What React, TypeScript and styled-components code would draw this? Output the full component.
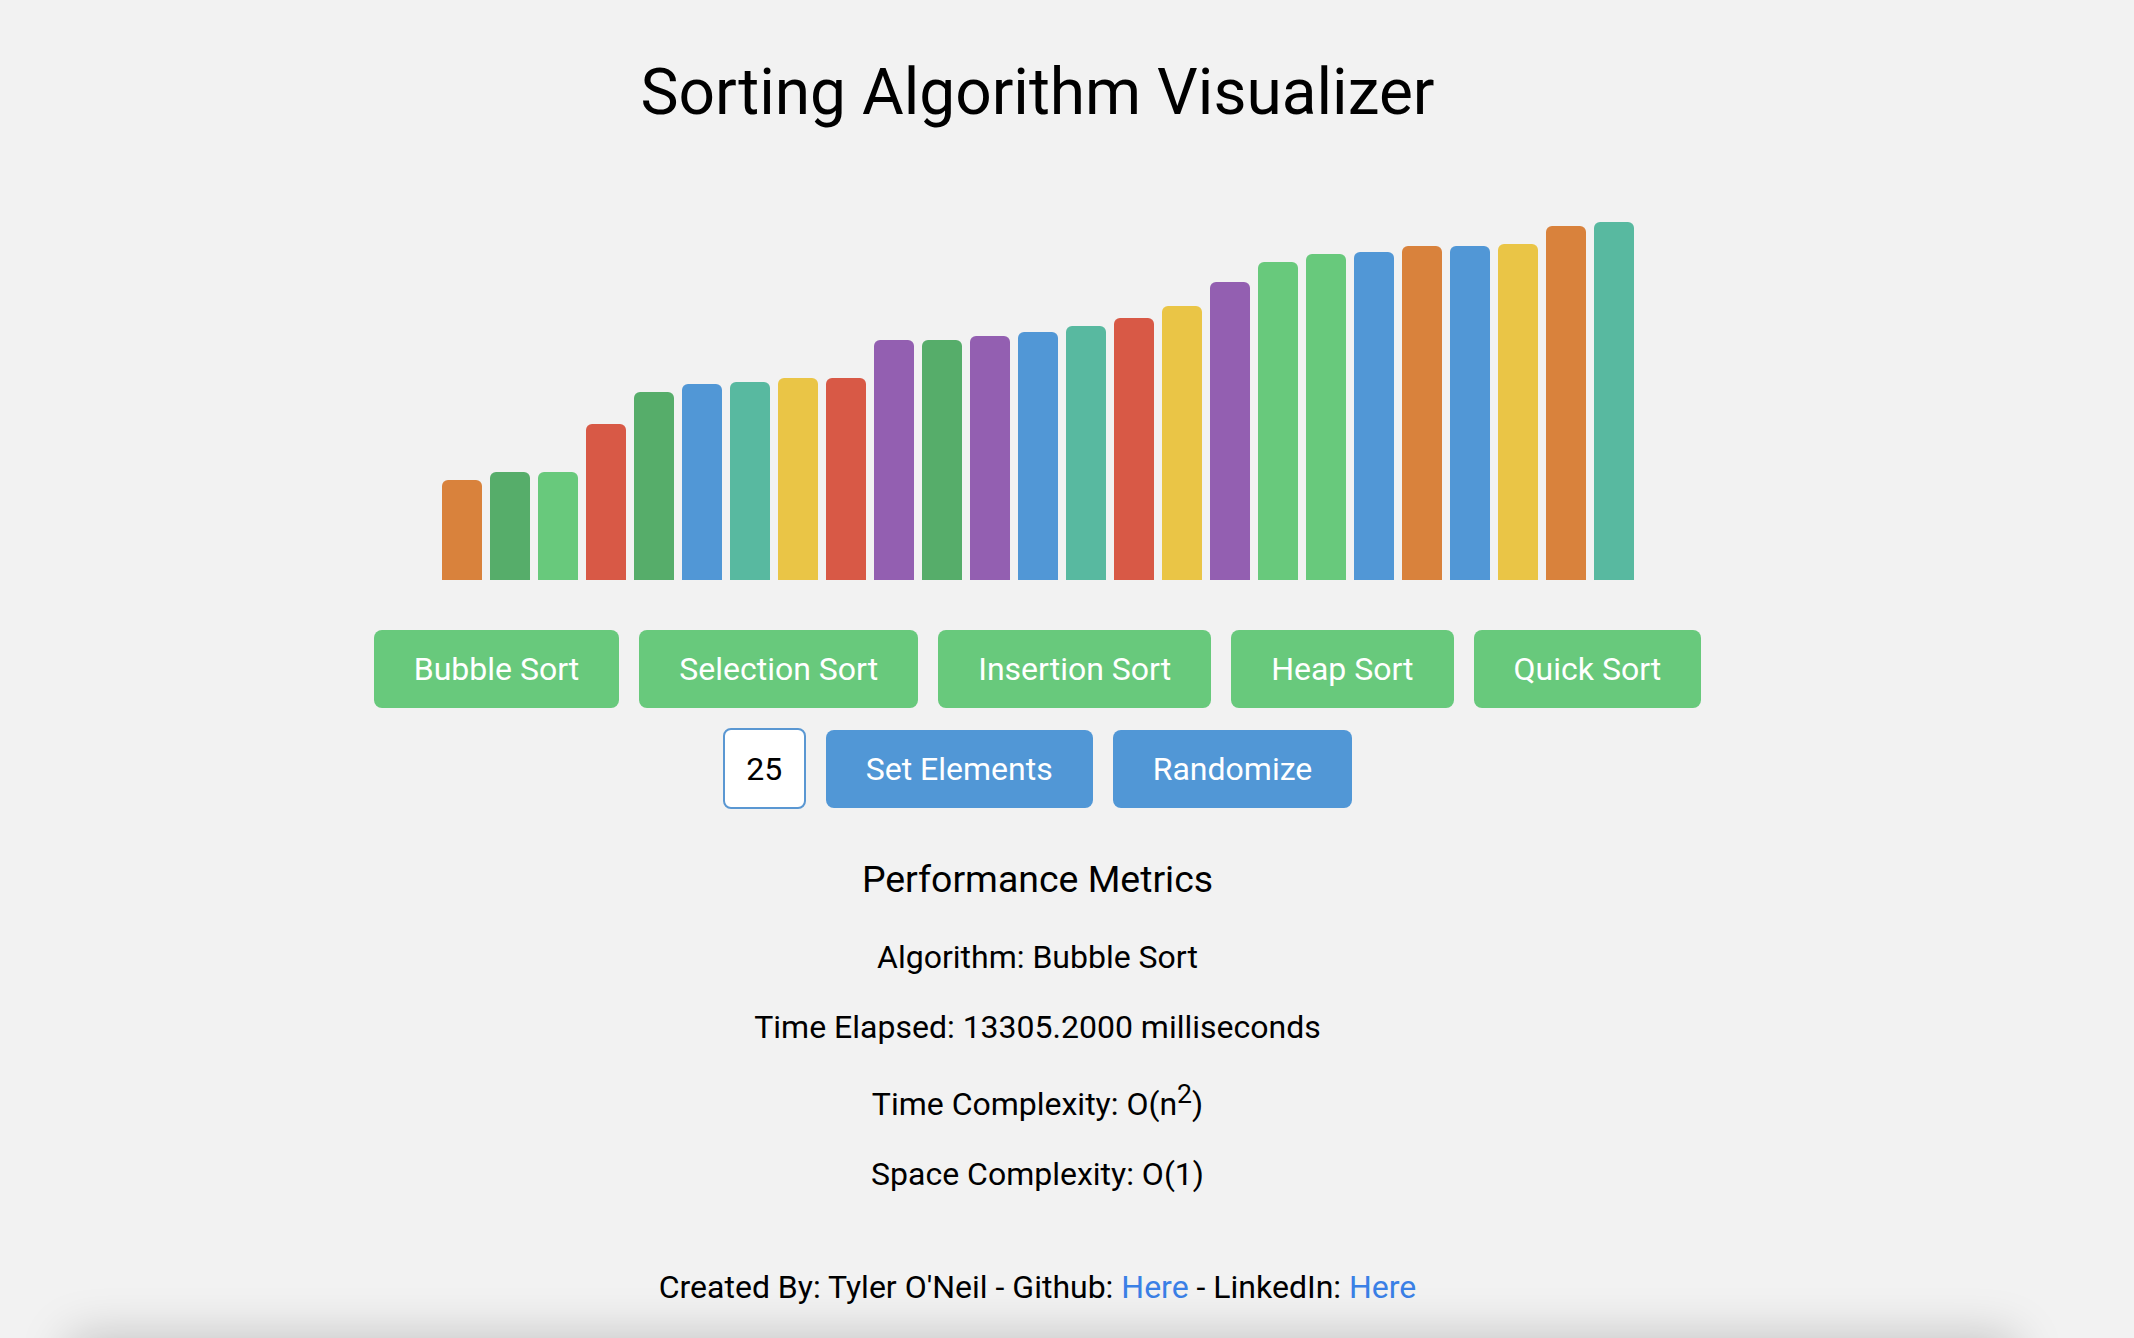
import React from "react";
import styled, { createGlobalStyle } from "styled-components";

const GlobalStyle = createGlobalStyle`
  html, body {
    margin: 0;
    padding: 0;
    background: #f2f2f2;
    font-family: Roboto, "Noto Sans", Arial, sans-serif;
    color: #000;
  }
`;

const Page = styled.div`
  box-sizing: border-box;
  width: 2075px;
  min-height: 100vh;
  display: flex;
  flex-direction: column;
  align-items: center;
  text-align: center;
`;

const Title = styled.h1`
  margin: 55px 0 0;
  font-size: 64px;
  font-weight: 400;
  line-height: 75px;
`;

const BarArea = styled.div`
  height: 450px;
  display: flex;
  align-items: flex-end;
  justify-content: center;
`;

const Bar = styled.div<{ $c: string }>`
  width: 40px;
  margin: 0 4px;
  background: ${(p) => p.$c};
  border-radius: 6px 6px 0 0;
`;

const ButtonRow = styled.div<{ $top: number }>`
  display: flex;
  align-items: center;
  justify-content: center;
  gap: 20px;
  margin-top: ${(p) => p.$top}px;
`;

const Button = styled.button<{ $variant: "sort" | "control" }>`
  font-family: Roboto, "Noto Sans", Arial, sans-serif;
  font-size: 32px;
  line-height: 38px;
  padding: 20px 40px;
  border: none;
  border-radius: 8px;
  color: #fff;
  background: ${(p) => (p.$variant === "sort" ? "#68c97c" : "#5197d6")};
  cursor: pointer;
`;

const CountInput = styled.input`
  box-sizing: border-box;
  width: 83px;
  height: 81px;
  font-family: Roboto, "Noto Sans", Arial, sans-serif;
  font-size: 32px;
  text-align: center;
  color: #000;
  background: #fff;
  border: 2px solid #5a97d2;
  border-radius: 8px;
  padding: 0;
  outline: none;
`;

const Metrics = styled.section`
  margin-top: 11px;
  display: flex;
  flex-direction: column;
  align-items: center;
`;

const MetricsTitle = styled.h3`
  font-size: 37.44px;
  font-weight: 400;
  margin: 37px 0;
`;

const MetricLine = styled.p`
  font-size: 32px;
  margin: 0 0 32px;
`;

const Footer = styled.footer`
  margin-top: 23px;
  font-size: 32px;
  padding: 20px 0;
`;

const Link = styled.a`
  color: #3a80e6;
  text-decoration: none;
`;

const BottomShadow = styled.div`
  position: fixed;
  top: 100vh;
  left: 70px;
  right: 120px;
  height: 60px;
  background: #f2f2f2;
  box-shadow: 0 0 50px rgba(0, 0, 0, 0.22);
`;

const C = {
  orange: "#d9823c",
  dgreen: "#56ad6a",
  lgreen: "#68c97c",
  red: "#d85946",
  blue: "#5197d6",
  teal: "#58b9a0",
  yellow: "#eac546",
  purple: "#935fb1",
};

const bars: [number, string][] = [
  [100, C.orange],
  [108, C.dgreen],
  [108, C.lgreen],
  [156, C.red],
  [188, C.dgreen],
  [196, C.blue],
  [198, C.teal],
  [202, C.yellow],
  [202, C.red],
  [240, C.purple],
  [240, C.dgreen],
  [244, C.purple],
  [248, C.blue],
  [254, C.teal],
  [262, C.red],
  [274, C.yellow],
  [298, C.purple],
  [318, C.lgreen],
  [326, C.lgreen],
  [328, C.blue],
  [334, C.orange],
  [334, C.blue],
  [336, C.yellow],
  [354, C.orange],
  [358, C.teal],
];

const sorts = ["Bubble Sort", "Selection Sort", "Insertion Sort", "Heap Sort", "Quick Sort"];

export default function App() {
  return (
    <>
      <GlobalStyle />
      <Page>
        <Title>Sorting Algorithm Visualizer</Title>
        <BarArea>
          {bars.map(([h, c], i) => (
            <Bar key={i} $c={c} style={{ height: h }} />
          ))}
        </BarArea>
        <ButtonRow $top={50}>
          {sorts.map((s) => (
            <Button key={s} $variant="sort">
              {s}
            </Button>
          ))}
        </ButtonRow>
        <ButtonRow $top={20}>
          <CountInput type="text" defaultValue="25" />
          <Button $variant="control">Set Elements</Button>
          <Button $variant="control">Randomize</Button>
        </ButtonRow>
        <Metrics>
          <MetricsTitle>Performance Metrics</MetricsTitle>
          <MetricLine>Algorithm: Bubble Sort</MetricLine>
          <MetricLine>Time Elapsed: 13305.2000 milliseconds</MetricLine>
          <MetricLine>
            Time Complexity: O(n<sup>2</sup>)
          </MetricLine>
          <MetricLine>Space Complexity: O(1)</MetricLine>
        </Metrics>
        <Footer>
          Created By: Tyler O'Neil - Github: <Link href="#">Here</Link> - LinkedIn:{" "}
          <Link href="#">Here</Link>
        </Footer>
      </Page>
      <BottomShadow />
    </>
  );
}
